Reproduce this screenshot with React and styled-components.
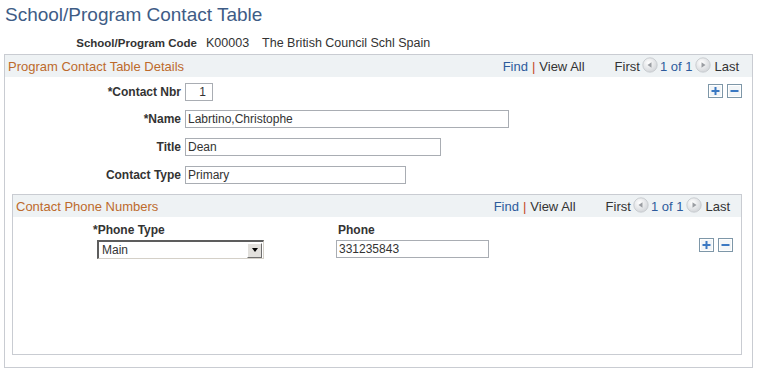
import React from 'react';
import styled, { createGlobalStyle } from 'styled-components';

const GlobalStyle = createGlobalStyle`
  body {
    margin: 0;
    background: #ffffff;
    font-family: "Liberation Sans", Arial, sans-serif;
    font-size: 12px;
    color: #333333;
  }
`;

const Page = styled.div`
  width: 760px;
  height: 378px;
  overflow: hidden;
  padding: 0 0 0 4px;
  box-sizing: border-box;
`;

const Title = styled.h1`
  margin: 0;
  padding: 4px 0 0 1px;
  height: 34px;
  box-sizing: border-box;
  font-size: 19px;
  font-weight: normal;
  color: #3e5c86;
  line-height: 22px;
`;

const CodeRow = styled.div`
  display: flex;
  align-items: center;
  height: 18px;
  line-height: 18px;
`;

const CodeLabel = styled.span`
  width: 193px;
  text-align: right;
  font-weight: bold;
  font-size: 11.5px;
  color: #333;
`;

const CodeValue = styled.span`
  margin-left: ${p => p.gap}px;
  font-size: 12.5px;
  color: #333;
`;

const Box = styled.div`
  border: 1px solid #c9ccd2;
  margin: ${p => p.margin || '0'};
  width: ${p => (p.w ? `${p.w}px` : 'auto')};
  height: ${p => p.height}px;
  box-sizing: border-box;
  display: flex;
  flex-direction: column;
`;

const BoxHeader = styled.div`
  height: 22px;
  background: #eef2f4;
  display: flex;
  align-items: center;
  padding: 0 ${p => p.padRight}px 0 3px;
  flex-shrink: 0;
  font-size: 13px;
`;

const HeaderTitle = styled.span`
  color: #bd6a2c;
  flex: 1;
`;

const NavLink = styled.span`
  color: #2d5b9c;
`;

const Sep = styled.span`
  color: #c44a22;
  margin: 0 4px;
`;

const NavText = styled.span`
  color: #333;
  margin-left: ${p => p.ml || 0}px;
`;

const NavCount = styled.span`
  color: #2d5b9c;
  margin: 0 1px;
`;

const Circle = styled.svg`
  width: 16px;
  height: 16px;
  margin: -3px 1px 0 2px;
  flex-shrink: 0;
`;

const NavCircle = ({ dir }) => (
  <Circle viewBox="0 0 16 16">
    <defs>
      <radialGradient id={`g${dir}`} cx="40%" cy="35%" r="70%">
        <stop offset="0" stopColor="#ffffff" />
        <stop offset="1" stopColor="#d0d3d7" />
      </radialGradient>
    </defs>
    <circle cx="8" cy="8" r="7.2" fill={`url(#g${dir})`} stroke="#c3c6ca" strokeWidth="0.8" />
    {dir === 'left'
      ? <path d="M5.5 8 L9.5 5.2 L9.5 10.8 Z" fill="#9a9da2" />
      : <path d="M10.5 8 L6.5 5.2 L6.5 10.8 Z" fill="#9a9da2" />}
  </Circle>
);

const BoxBody = styled.div`
  flex: 1;
  display: flex;
  flex-direction: column;
`;

const FieldRow = styled.div`
  display: flex;
  align-items: center;
  height: 18px;
  margin-top: ${p => p.mt}px;
`;

const Label = styled.label`
  width: 176px;
  text-align: right;
  font-weight: bold;
  color: #333;
  padding-right: 4px;
`;

const TextBox = styled.div`
  width: ${p => p.w}px;
  height: 18px;
  box-sizing: border-box;
  border: 1px solid #a9adb3;
  background: #fff;
  padding: 0 3px 0 2px;
  line-height: 16px;
  color: #333;
  text-align: ${p => (p.right ? 'right' : 'left')};
  padding-right: ${p => (p.right ? 6 : 3)}px;
`;

const RowButtons = styled.div`
  margin-left: auto;
  display: flex;
  gap: 4px;
  margin-right: ${p => p.mr}px;
  margin-top: ${p => p.mt || 0}px;
`;

const SquareBtn = styled.svg`
  width: 15px;
  height: 14px;
`;

const AddBtn = () => (
  <SquareBtn viewBox="0 0 15 14">
    <rect x="0.5" y="0.5" width="14" height="13" fill="#f2f5f7" stroke="#7e97a8" />
    <rect x="1.5" y="1.5" width="12" height="11" fill="none" stroke="#ffffff" />
    <path d="M6.5 3 H8.5 V6 H11.5 V8 H8.5 V11 H6.5 V8 H3.5 V6 H6.5 Z" fill="#3a78c2" />
  </SquareBtn>
);

const DelBtn = () => (
  <SquareBtn viewBox="0 0 15 14">
    <rect x="0.5" y="0.5" width="14" height="13" fill="#f2f5f7" stroke="#7e97a8" />
    <rect x="1.5" y="1.5" width="12" height="11" fill="none" stroke="#ffffff" />
    <rect x="3.5" y="6" width="8" height="2" fill="#3a78c2" />
  </SquareBtn>
);

const GridHead = styled.div`
  display: flex;
  height: 16px;
  line-height: 16px;
  margin-top: 5px;
  font-weight: bold;
  color: #333;
`;

const ColHead = styled.span`
  width: ${p => p.w}px;
  padding-left: ${p => p.pl || 0}px;
  box-sizing: border-box;
`;

const GridRow = styled.div`
  display: flex;
  align-items: flex-start;
  margin-top: 2px;
`;

const Cell = styled.div`
  width: ${p => p.w}px;
  padding-left: ${p => p.pl || 0}px;
  box-sizing: border-box;
`;

const Select = styled.div`
  width: 167px;
  height: 19px;
  box-sizing: border-box;
  border-top: 2px solid #5d5d5d;
  border-left: 2px solid #5d5d5d;
  border-right: 1px solid #d4d0c8;
  border-bottom: 1px solid #d4d0c8;
  background: #fff;
  display: flex;
  align-items: center;
  padding-left: 3px;
  color: #333;
`;

const SelectText = styled.span`
  flex: 1;
`;

const SelectArrow = styled.div`
  width: 15px;
  height: 15px;
  background: #e2e0dc;
  border-top: 1px solid #ffffff;
  border-left: 1px solid #ffffff;
  border-right: 1px solid #6f6f6f;
  border-bottom: 1px solid #6f6f6f;
  box-sizing: border-box;
  display: flex;
  align-items: center;
  justify-content: center;
  margin-right: 1px;

  &::after {
    content: '';
    border-left: 3.5px solid transparent;
    border-right: 3.5px solid transparent;
    border-top: 4px solid #000;
  }
`;

const HeaderNav = () => (
  <>
    <NavLink>Find</NavLink>
    <Sep>|</Sep>
    <NavText>View All</NavText>
    <NavText ml={30}>First</NavText>
    <NavCircle dir="left" />
    <NavCount>1 of 1</NavCount>
    <NavCircle dir="right" />
    <NavText ml={2}>Last</NavText>
  </>
);

export default function App() {
  return (
    <Page>
      <GlobalStyle />
      <Title>School/Program Contact Table</Title>
      <CodeRow>
        <CodeLabel>School/Program Code</CodeLabel>
        <CodeValue gap={9}>K00003</CodeValue>
        <CodeValue gap={13}>The British Council Schl Spain</CodeValue>
      </CodeRow>
      <Box margin="2px 0 0 0" w={749} height={314}>
        <BoxHeader padRight={13}>
          <HeaderTitle>Program Contact Table Details</HeaderTitle>
          <HeaderNav />
        </BoxHeader>
        <BoxBody>
          <FieldRow mt={6}>
            <Label>*Contact Nbr</Label>
            <TextBox w={28} right>1</TextBox>
            <RowButtons mr={10} mt={-2}>
              <AddBtn />
              <DelBtn />
            </RowButtons>
          </FieldRow>
          <FieldRow mt={9}>
            <Label>*Name</Label>
            <TextBox w={324}>Labrtino,Christophe</TextBox>
          </FieldRow>
          <FieldRow mt={10}>
            <Label>Title</Label>
            <TextBox w={256}>Dean</TextBox>
          </FieldRow>
          <FieldRow mt={10}>
            <Label>Contact Type</Label>
            <TextBox w={221}>Primary</TextBox>
          </FieldRow>
          <Box margin="10px 10px 12px 7px" height={161}>
            <BoxHeader padRight={11}>
              <HeaderTitle>Contact Phone Numbers</HeaderTitle>
              <HeaderNav />
            </BoxHeader>
            <BoxBody>
              <GridHead>
                <ColHead w={247} pl={80}>*Phone Type</ColHead>
                <ColHead w={200} pl={78}>Phone</ColHead>
              </GridHead>
              <GridRow>
                <Cell w={247} pl={84}>
                  <Select>
                    <SelectText>Main</SelectText>
                    <SelectArrow />
                  </Select>
                </Cell>
                <Cell w={230} pl={76}>
                  <TextBox w={153}>331235843</TextBox>
                </Cell>
                <RowButtons mr={8} mt={-2}>
                  <AddBtn />
                  <DelBtn />
                </RowButtons>
              </GridRow>
            </BoxBody>
          </Box>
        </BoxBody>
      </Box>
    </Page>
  );
}
